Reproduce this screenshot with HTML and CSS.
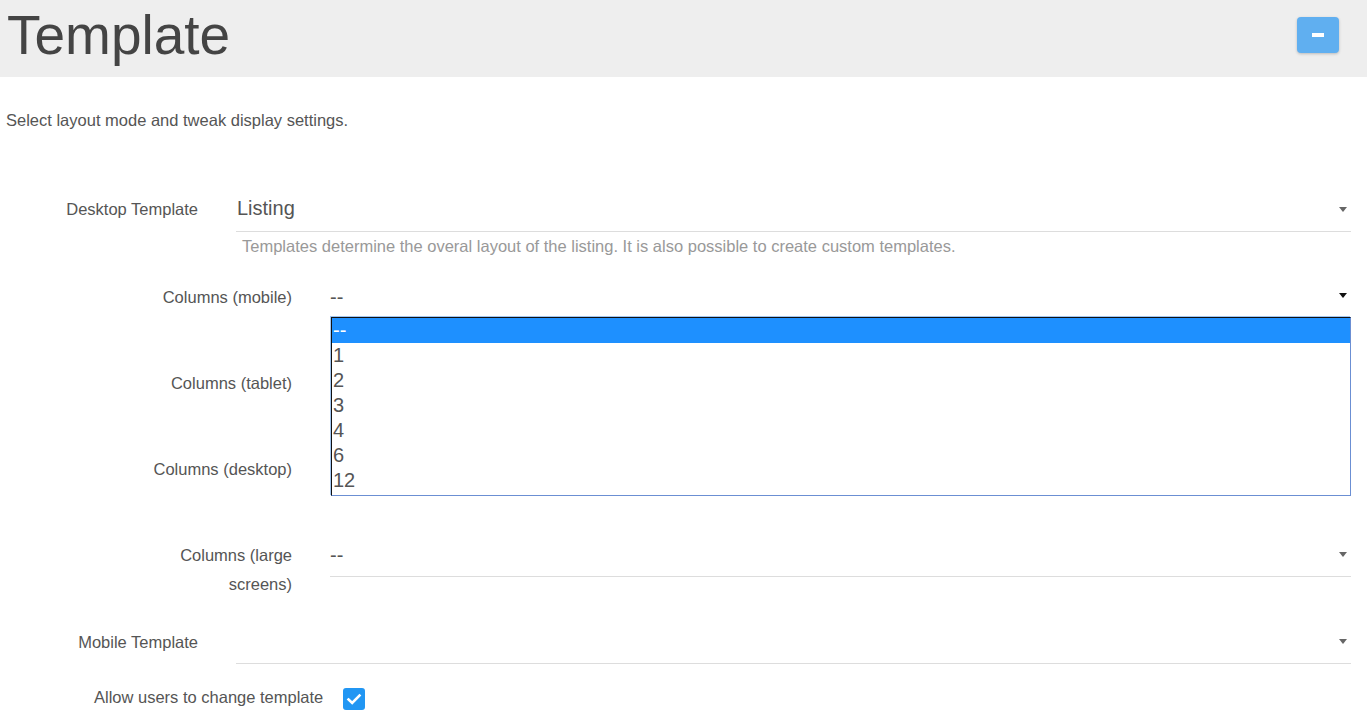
FILE: index.html
```html
<!DOCTYPE html>
<html lang="en">
<head>
<meta charset="utf-8">
<title>Template</title>
<link rel="stylesheet" href="styles.css">
</head>
<body>
<header class="header">
  <h1 class="title">Template</h1>
  <button class="collapse-btn" type="button" aria-label="Collapse"><span class="dash"></span></button>
</header>

<p class="desc">Select layout mode and tweak display settings.</p>

<div class="form">
  <div class="field field-first">
    <label class="label">Desktop Template</label>
    <div class="control">
      <div class="select select-big">Listing<span class="caret"></span></div>
      <div class="help">Templates determine the overal layout of the listing. It is also possible to create custom templates.</div>
    </div>
  </div>

  <div class="columns">
    <div class="field">
      <label class="label">Columns (mobile)</label>
      <div class="control">
        <div class="select open">--<span class="caret caret-dark"></span>
          <ul class="listbox">
            <li class="opt selected">--</li>
            <li class="opt">1</li>
            <li class="opt">2</li>
            <li class="opt">3</li>
            <li class="opt">4</li>
            <li class="opt">6</li>
            <li class="opt">12</li>
          </ul>
        </div>
        <div class="help-empty"></div>
      </div>
    </div>
    <div class="field">
      <label class="label">Columns (tablet)</label>
      <div class="control">
        <div class="select"><span class="caret"></span></div>
        <div class="help-empty"></div>
      </div>
    </div>
    <div class="field">
      <label class="label">Columns (desktop)</label>
      <div class="control">
        <div class="select"><span class="caret"></span></div>
        <div class="help-empty"></div>
      </div>
    </div>
    <div class="field field-last">
      <label class="label">Columns (large screens)</label>
      <div class="control">
        <div class="select">--<span class="caret"></span></div>
        <div class="help-empty"></div>
      </div>
    </div>
  </div>

  <div class="field field-mobile">
    <label class="label">Mobile Template</label>
    <div class="control">
      <div class="select"><span class="caret"></span></div>
    </div>
  </div>

  <div class="field-check">
    <label class="check-label">Allow users to change template</label>
    <span class="checkbox">
      <svg width="22" height="22" viewBox="0 0 22 22"><path d="M5.5 11.5 L9.2 15 L16.5 7.5" fill="none" stroke="#fff" stroke-width="2.6" stroke-linecap="square"/></svg>
    </span>
  </div>
</div>
</body>
</html>
```

FILE: styles.css
```css
* { box-sizing: border-box; }
html, body { margin: 0; padding: 0; background: #fff; }
body {
  font-family: "Liberation Sans", Arial, sans-serif;
  color: #555;
  font-size: 16.5px;
}

.header {
  height: 77px;
  background: #eeeeee;
  display: flex;
  justify-content: space-between;
  align-items: flex-start;
  padding: 0 28px 0 7px;
}
.title {
  margin: 0;
  padding-top: 4px;
  font-size: 55px;
  line-height: 63px;
  font-weight: normal;
  color: #444;
}
.collapse-btn {
  margin-top: 17px;
  width: 42px;
  height: 36px;
  border: none;
  border-radius: 4px;
  background: #60aff0;
  box-shadow: 0 1px 3px rgba(0,0,0,0.22);
  display: flex;
  align-items: center;
  justify-content: center;
  padding: 0;
}
.dash {
  display: block;
  width: 12px;
  height: 4px;
  background: #fff;
}

.desc {
  margin: 33px 0 0 6px;
  line-height: 20px;
  font-size: 16.5px;
  color: #555;
}

.form {
  padding: 0 16px 0 6px;
  margin-top: 60px;
}

.field {
  display: flex;
  gap: 38px;
  margin-bottom: 22px;
}
.field-first { margin-bottom: 21px; }
.field-first .label { padding-top: 5px; }
.label {
  flex: 0 0 192px;
  text-align: right;
  padding-top: 6px;
  line-height: 29px;
  font-size: 16.5px;
  color: #555;
}
.control {
  flex: 1;
  min-width: 0;
}

.select {
  position: relative;
  height: 42px;
  border-bottom: 1px solid #dddddd;
  display: flex;
  align-items: center;
  padding-bottom: 1px;
  font-size: 20px;
  color: #555;
}
.select-big { padding-left: 1px; padding-bottom: 4px; }

.caret {
  position: absolute;
  right: 4px;
  top: 17px;
  width: 0;
  height: 0;
  border-left: 4.5px solid transparent;
  border-right: 4.5px solid transparent;
  border-top: 5px solid #666;
}
.caret-dark { border-top-color: #111; top: 16px; }

.help {
  padding: 4px 0 0 6px;
  line-height: 20px;
  font-size: 16.5px;
  color: #999;
}
.help-empty { height: 22px; }

.columns { margin-left: 126px; }
.columns .label { flex-basis: 160px; }
.columns .field-last { margin-bottom: 23px; }

.field-mobile { margin-bottom: 12px; }

.listbox {
  position: absolute;
  left: 1px;
  right: 0;
  top: 40px;
  margin: 0;
  padding: 0 0 2px 0;
  list-style: none;
  background: #fff;
  border: 1px solid;
  border-color: #111 #6b8fd3 #6b8fd3 #111;
  box-shadow: -1px -1px 0 #a3c6ef;
  z-index: 5;
}
.opt {
  height: 25px;
  line-height: 25px;
  font-size: 20px;
  color: #555;
  padding-left: 1px;
}
.opt.selected {
  background: #1e90ff;
  color: #fff;
}

.field-check {
  display: flex;
  align-items: flex-start;
  gap: 20px;
  margin-left: 88px;
}
.check-label {
  padding-top: 7px;
  line-height: 29px;
  font-size: 16.5px;
  color: #555;
}
.checkbox {
  margin-top: 12px;
  width: 22px;
  height: 22px;
  border-radius: 3px;
  background: #2196f3;
  display: block;
}
.checkbox svg { display: block; }
```
